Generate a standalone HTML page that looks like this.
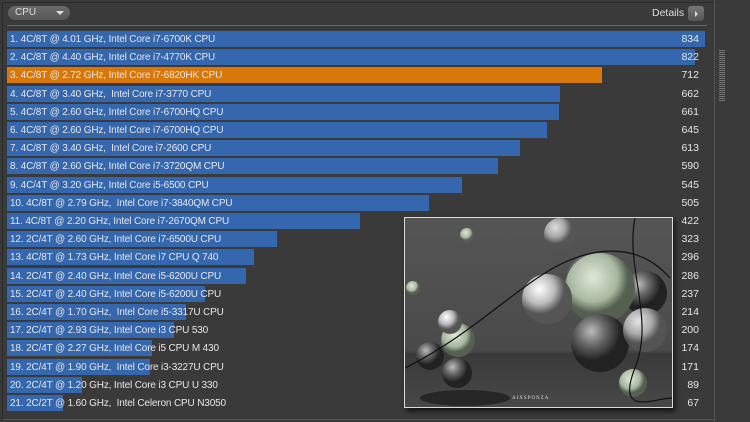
<!DOCTYPE html><html><head><style>
body{margin:0;width:750px;height:422px;background:#3a3a3a;overflow:hidden;font-family:"Liberation Sans",Tahoma,sans-serif;position:relative}
.fr{position:absolute;left:2px;top:2px;width:711px;height:416px;border-left:1px solid #2a2a2a;border-top:1px solid #2a2a2a;border-bottom:1px solid #555}
.sep{position:absolute;left:714px;top:0;width:1px;height:422px;background:#555}
.grip{position:absolute;left:719px;top:50px;width:6px;height:52px;background:repeating-linear-gradient(#777 0 1px,#3a3a3a 1px 2px)}
.dd{position:absolute;left:8px;top:6px;width:62px;height:14px;background:linear-gradient(#6a6a6a,#575757);border-radius:7px;color:#ddd;font-size:10px;line-height:14px;padding-left:7px;box-sizing:border-box}
.dd:after{content:"";position:absolute;right:6px;top:5px;border:4px solid transparent;border-top:4px solid #ddd;border-bottom:0}
.det{position:absolute;left:652px;top:7px;color:#ddd;font-size:10.5px}
.db{position:absolute;left:688px;top:6px;width:16px;height:15px;background:linear-gradient(#777,#555);border-radius:3px}
.db:after{content:"";position:absolute;left:7px;top:5px;border:3px solid transparent;border-left:3px solid #ddd;border-right:0}
.hl{position:absolute;left:7px;top:25px;width:700px;height:1px;background:#666}
.r{position:absolute;left:7px;height:16px;width:700px}
.b{position:absolute;left:0;top:0;height:16px;background:#3567ae}
.t{position:absolute;left:3px;top:1px;font-size:10px;letter-spacing:-0.15px;color:#e6e6e6;white-space:pre;line-height:15px}
.v{position:absolute;right:8px;top:1px;font-size:10.5px;color:#e6e6e6;line-height:15px}
.img{position:absolute;left:404px;top:217px;width:267px;height:189px;border:1px solid #ddd;box-shadow:2px 3px 5px #111}
</style></head><body>
<div class="fr"></div><div class="sep"></div><div class="grip"></div>
<div class="dd">CPU</div><div class="det">Details</div><div class="db"></div><div class="hl"></div>
<div class="r" style="top:31px"><div class="b" style="width:698px"></div><div class="t">1. 4C/8T @ 4.01 GHz, Intel Core i7-6700K CPU</div><div class="v">834</div></div>
<div class="r" style="top:49px"><div class="b" style="width:688px"></div><div class="t">2. 4C/8T @ 4.40 GHz, Intel Core i7-4770K CPU</div><div class="v">822</div></div>
<div class="r" style="top:67px"><div class="b" style="width:595px;background:#d8780a"></div><div class="t">3. 4C/8T @ 2.72 GHz, Intel Core i7-6820HK CPU</div><div class="v">712</div></div>
<div class="r" style="top:86px"><div class="b" style="width:553px"></div><div class="t">4. 4C/8T @ 3.40 GHz,  Intel Core i7-3770 CPU</div><div class="v">662</div></div>
<div class="r" style="top:104px"><div class="b" style="width:552px"></div><div class="t">5. 4C/8T @ 2.60 GHz, Intel Core i7-6700HQ CPU</div><div class="v">661</div></div>
<div class="r" style="top:122px"><div class="b" style="width:540px"></div><div class="t">6. 4C/8T @ 2.60 GHz, Intel Core i7-6700HQ CPU</div><div class="v">645</div></div>
<div class="r" style="top:140px"><div class="b" style="width:513px"></div><div class="t">7. 4C/8T @ 3.40 GHz,  Intel Core i7-2600 CPU</div><div class="v">613</div></div>
<div class="r" style="top:158px"><div class="b" style="width:491px"></div><div class="t">8. 4C/8T @ 2.60 GHz, Intel Core i7-3720QM CPU</div><div class="v">590</div></div>
<div class="r" style="top:177px"><div class="b" style="width:455px"></div><div class="t">9. 4C/4T @ 3.20 GHz, Intel Core i5-6500 CPU</div><div class="v">545</div></div>
<div class="r" style="top:195px"><div class="b" style="width:422px"></div><div class="t">10. 4C/8T @ 2.79 GHz,  Intel Core i7-3840QM CPU</div><div class="v">505</div></div>
<div class="r" style="top:213px"><div class="b" style="width:353px"></div><div class="t">11. 4C/8T @ 2.20 GHz, Intel Core i7-2670QM CPU</div><div class="v">422</div></div>
<div class="r" style="top:231px"><div class="b" style="width:270px"></div><div class="t">12. 2C/4T @ 2.60 GHz, Intel Core i7-6500U CPU</div><div class="v">323</div></div>
<div class="r" style="top:249px"><div class="b" style="width:247px"></div><div class="t">13. 4C/8T @ 1.73 GHz, Intel Core i7 CPU Q 740</div><div class="v">296</div></div>
<div class="r" style="top:268px"><div class="b" style="width:239px"></div><div class="t">14. 2C/4T @ 2.40 GHz, Intel Core i5-6200U CPU</div><div class="v">286</div></div>
<div class="r" style="top:286px"><div class="b" style="width:198px"></div><div class="t">15. 2C/4T @ 2.40 GHz, Intel Core i5-6200U CPU</div><div class="v">237</div></div>
<div class="r" style="top:304px"><div class="b" style="width:179px"></div><div class="t">16. 2C/4T @ 1.70 GHz,  Intel Core i5-3317U CPU</div><div class="v">214</div></div>
<div class="r" style="top:322px"><div class="b" style="width:167px"></div><div class="t">17. 2C/4T @ 2.93 GHz, Intel Core i3 CPU 530</div><div class="v">200</div></div>
<div class="r" style="top:340px"><div class="b" style="width:145px"></div><div class="t">18. 2C/4T @ 2.27 GHz, Intel Core i5 CPU M 430</div><div class="v">174</div></div>
<div class="r" style="top:359px"><div class="b" style="width:143px"></div><div class="t">19. 2C/4T @ 1.90 GHz,  Intel Core i3-3227U CPU</div><div class="v">171</div></div>
<div class="r" style="top:377px"><div class="b" style="width:75px"></div><div class="t">20. 2C/4T @ 1.20 GHz, Intel Core i3 CPU U 330</div><div class="v">89</div></div>
<div class="r" style="top:395px"><div class="b" style="width:56px"></div><div class="t">21. 2C/2T @ 1.60 GHz,  Intel Celeron CPU N3050</div><div class="v">67</div></div>
<div class="img"><svg width="267" height="189" viewBox="0 0 267 189">
<defs>
<linearGradient id="bg" x1="0" y1="0" x2="0" y2="1"><stop offset="0" stop-color="#555"/><stop offset=".7" stop-color="#4a4a4a"/><stop offset=".72" stop-color="#3a3a3a"/><stop offset="1" stop-color="#484848"/></linearGradient>
<radialGradient id="w" cx=".35" cy=".3"><stop offset="0" stop-color="#fff"/><stop offset=".6" stop-color="#bbb"/><stop offset="1" stop-color="#555"/></radialGradient>
<radialGradient id="g" cx=".4" cy=".35"><stop offset="0" stop-color="#dfe8d8"/><stop offset=".7" stop-color="#a8b8a0"/><stop offset="1" stop-color="#556050"/></radialGradient>
<radialGradient id="d" cx=".35" cy=".3"><stop offset="0" stop-color="#bbb"/><stop offset=".5" stop-color="#666"/><stop offset="1" stop-color="#222"/></radialGradient>
</defs>
<rect width="267" height="189" fill="url(#bg)"/>
<circle cx="190" cy="65" r="30" fill="url(#d)"/>
<circle cx="240" cy="75" r="22" fill="url(#d)"/>
<circle cx="155" cy="16" r="16" fill="url(#w)" opacity=".8"/>
<circle cx="195" cy="70" r="35" fill="url(#g)"/>
<circle cx="142" cy="81" r="25" fill="url(#w)"/>
<circle cx="195" cy="125" r="29" fill="url(#d)"/>
<circle cx="240" cy="112" r="22" fill="url(#w)" opacity=".85"/>
<circle cx="53" cy="122" r="17" fill="url(#g)"/>
<circle cx="45" cy="104" r="12" fill="url(#w)"/>
<circle cx="25" cy="138" r="14" fill="url(#d)"/>
<circle cx="52" cy="155" r="15" fill="url(#d)"/>
<circle cx="228" cy="165" r="14" fill="url(#g)"/>
<circle cx="62" cy="17" r="7" fill="url(#g)"/>
<circle cx="8" cy="70" r="7" fill="url(#g)"/>
<path d="M0 150 C60 120 100 80 140 55 S230 20 265 60 M230 0 C220 50 250 100 230 150 S250 180 267 180" stroke="#111" fill="none" stroke-width="1.2"/>
<ellipse cx="60" cy="180" rx="45" ry="8" fill="#1a1a1a" opacity=".7"/>
<text x="107" y="181" font-size="5" fill="#ddd" font-family="Liberation Serif,serif" letter-spacing="1">AIXSPONZA</text>
</svg></div>
</body></html>
